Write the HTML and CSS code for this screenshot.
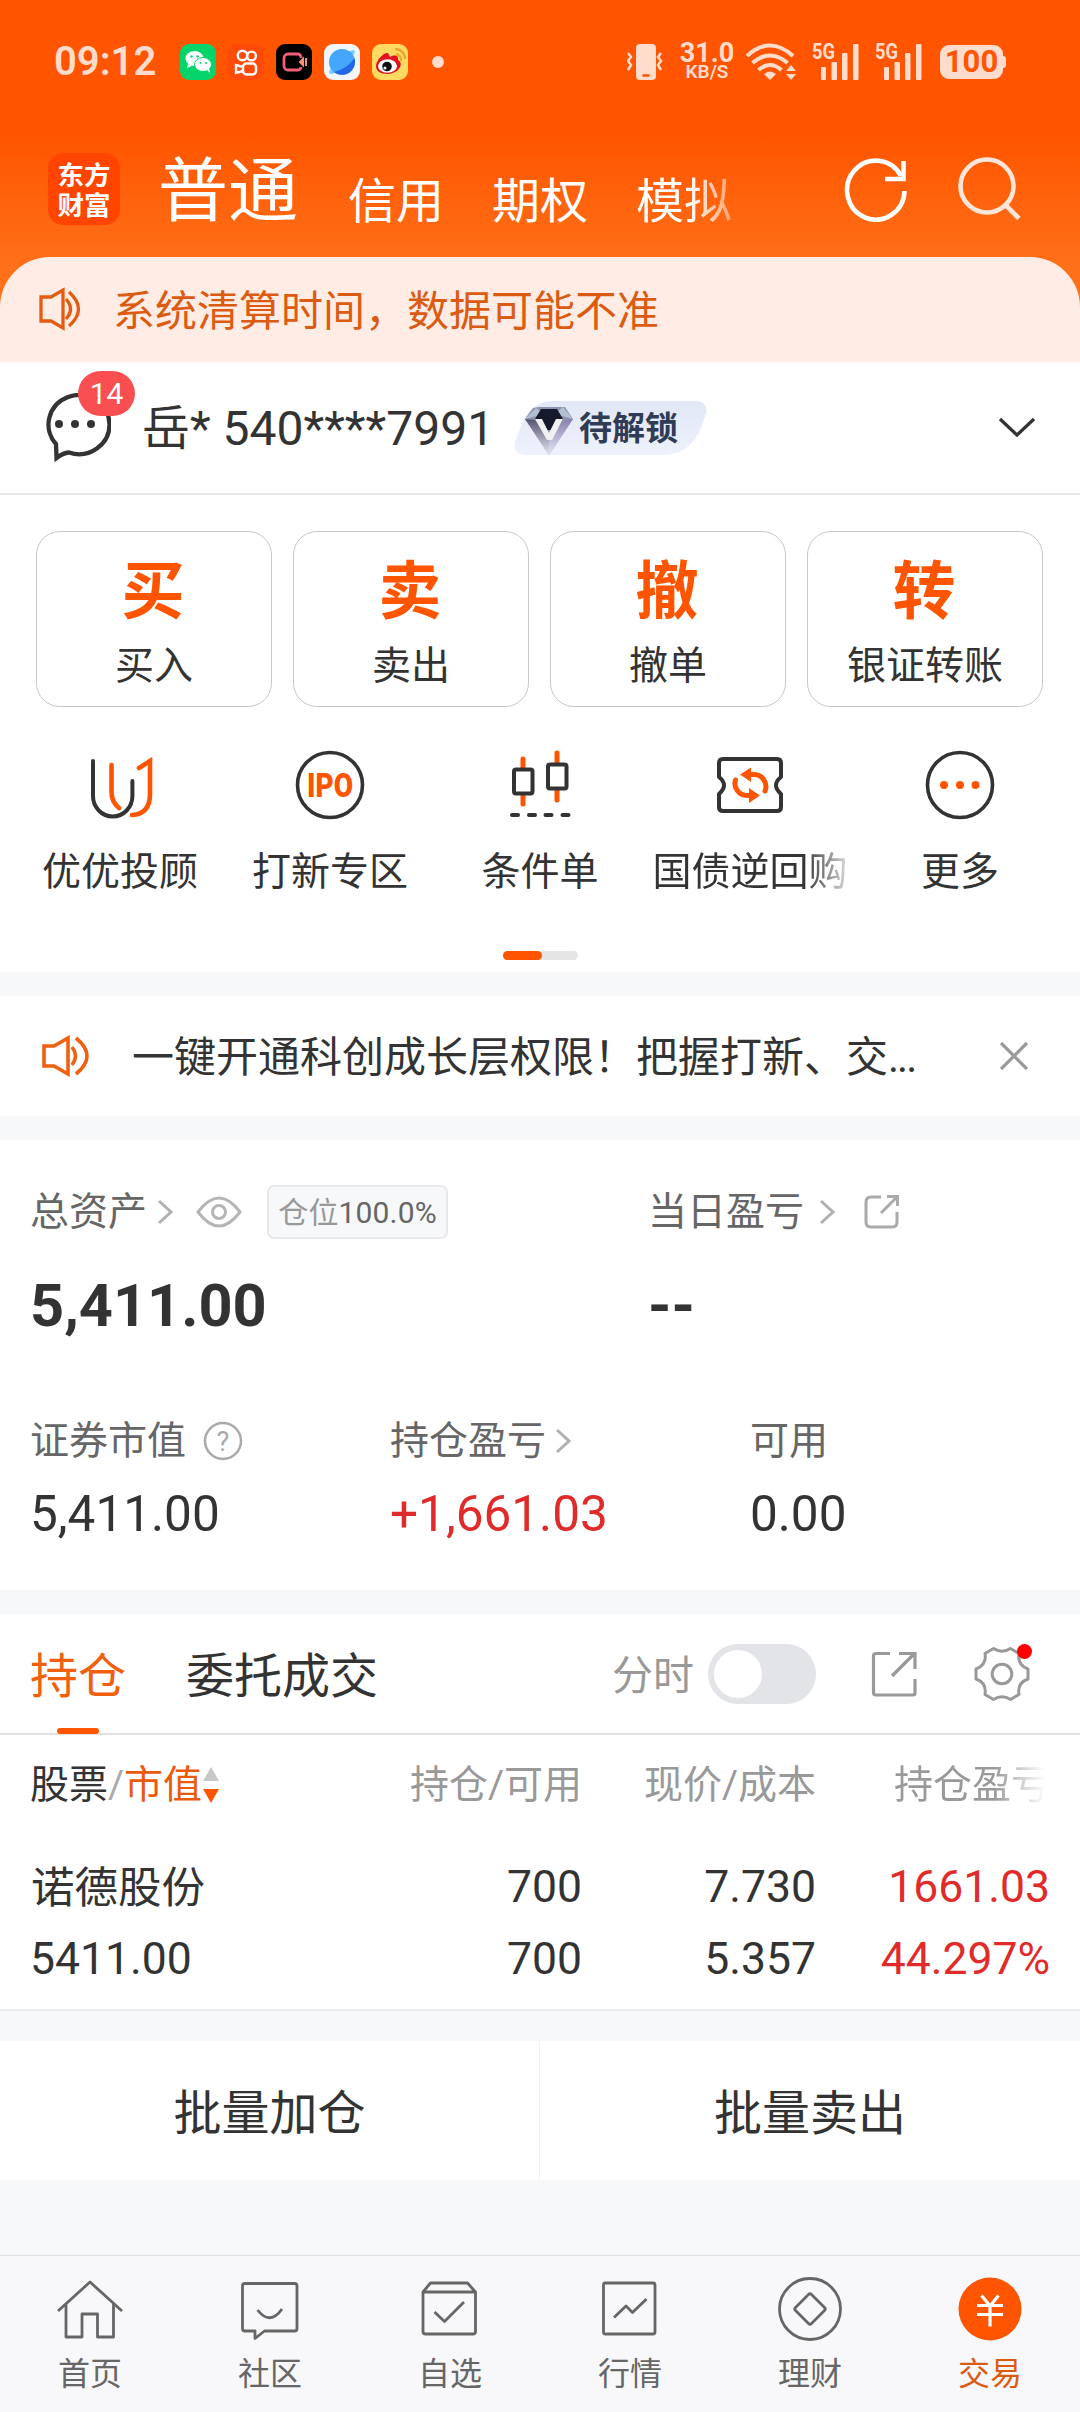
FILE: index.html
```html
<!DOCTYPE html>
<html lang="zh-CN">
<head>
<meta charset="utf-8">
<title>交易</title>
<link rel="stylesheet" href="styles.css">
</head>
<body>
<div class="screen">
  <div class="top">
    <div class="status">
      <span class="clock">09:12</span>
      <div class="apps">
        <svg width="36" height="36" viewBox="0 0 36 36"><rect width="36" height="36" rx="9" fill="#05d46b"/><ellipse cx="14.500" cy="14.500" rx="9" ry="7.500" fill="#fff"/><path d="M8 20l-1 4 5-2z" fill="#fff"/><ellipse cx="23" cy="20.500" rx="8.500" ry="7" fill="#fff" stroke="#05d46b"/><path d="M27 26l3 3-1-5z" fill="#fff"/><circle cx="11.500" cy="12.500" r="1.200" fill="#05d46b"/><circle cx="17.500" cy="12.500" r="1.200" fill="#05d46b"/><circle cx="20.500" cy="19" r="1" fill="#05d46b"/><circle cx="26" cy="19" r="1" fill="#05d46b"/></svg>
        <svg width="36" height="36" viewBox="0 0 36 36" fill="none" stroke="#fff" stroke-width="2.400"><rect width="36" height="36" rx="9" fill="#ff4a0a" stroke="none"/><circle cx="14.500" cy="11.500" r="4.800"/><circle cx="23.500" cy="12" r="4.400"/><rect x="15" y="19.500" width="13" height="11" rx="3.500"/><path d="M15 23l-7-2v8l7-2"/></svg>
        <svg width="36" height="36" viewBox="0 0 36 36" fill="none"><rect width="36" height="36" rx="9" fill="#000"/><path d="M25 14v-1a3 3 0 0 0-3-3H12a4 4 0 0 0-4 4v8a4 4 0 0 0 4 4h10a3 3 0 0 0 3-3" stroke="#ef5f78" stroke-width="2.800"/><path d="M24 18l3-3v6zM30 14v8" fill="#f98e7c" stroke="#f98e7c" stroke-width="2"/></svg>
        <svg width="36" height="36" viewBox="0 0 36 36"><rect width="36" height="36" rx="9" fill="#f2f5f9"/><ellipse cx="18" cy="18" rx="17" ry="4.500" transform="rotate(-43 18 18)" fill="#80cbfb"/><circle cx="18" cy="18" r="13" fill="#45a6fa"/><path d="M30.500 14A13 13 0 0 1 10 28Q23 25 30.500 14z" fill="#2466e8"/></svg>
        <svg width="36" height="36" viewBox="0 0 36 36" fill="none"><rect width="36" height="36" rx="9" fill="#ffda62"/><path d="M4 22c0-6 8-14 12-13l2 4c5-3 9-1 8 3 6 3 2 13-10 14C8 30 4 27 4 22z" fill="#e01221"/><ellipse cx="15.500" cy="22" rx="9.500" ry="6.700" fill="#fff"/><circle cx="15" cy="22.500" r="4.800" fill="#111"/><circle cx="13" cy="24" r="1.500" fill="#fff"/><path d="M24 10a6 6 0 0 1 5 7M23 5a10 10 0 0 1 10 10" stroke="#f0a52a" stroke-width="2.300"/></svg>
      </div>
      <i class="more-dot"></i>
      <svg class="vibrate" width="38" height="36" viewBox="0 0 38 36" fill="none" stroke="#ffdccb" stroke-width="2.500"><rect x="9" width="20" height="36" rx="4" fill="#ffdccb" stroke="none"/><path d="M15.500 31.500h7" stroke="#ff5500"/><path d="M1 9l3 4-3 4 3 4-3 5M34 9l-3 4 3 4-3 4 3 5"/></svg>
      <div class="speed"><b>31.0</b><span>KB/S</span></div>
      <svg class="wifi" width="52" height="38" viewBox="0 0 52 38" fill="none" stroke="#ffdccb" stroke-width="4"><path d="M2 13Q25-8 48 13M7.500 20Q25 5 42.500 20M13.500 27Q25 17 36.500 27"/><path d="M25 37l-6-6q6-5 12 0zM46 22l5 6H41zM46 37l5-6H41z" fill="#ffdccb" stroke="none"/></svg>
      <svg class="signal" width="49" height="38" viewBox="0 0 49 38" fill="#ffdccb"><text x="1" y="16" textLength="23" lengthAdjust="spacingAndGlyphs">5G</text><rect x="10" y="24" width="5" height="13" rx="1"/><rect x="20.500" y="19" width="5.500" height="18" rx="1"/><rect x="31" y="10" width="5.500" height="27" rx="1"/><rect x="42" y="1" width="5.500" height="36" rx="1"/></svg>
      <svg class="signal" width="49" height="38" viewBox="0 0 49 38" fill="#ffdccb"><text x="1" y="16" textLength="23" lengthAdjust="spacingAndGlyphs">5G</text><rect x="10" y="24" width="5" height="13" rx="1"/><rect x="20.500" y="19" width="5.500" height="18" rx="1"/><rect x="31" y="10" width="5.500" height="27" rx="1"/><rect x="42" y="1" width="5.500" height="36" rx="1"/></svg>
      <div class="battery"><span>100</span></div>
    </div>
    <div class="header">
      <div class="logo"><span>东方</span><span>财富</span></div>
      <span class="tab-main">普通</span>
      <span class="tab">信用</span>
      <span class="tab">期权</span>
      <span class="tab fade">模拟</span>
      <svg class="refresh" width="64" height="64" viewBox="0 0 64 64" fill="none" stroke="#fff" stroke-width="4.600"><path d="M60.500 33A28.700 29.500 0 1 1 57 18"/><path d="M59.500 3v18H41"/></svg>
      <svg width="66" height="66" viewBox="0 0 66 66" fill="none" stroke="#ffe6d8" stroke-width="4.600"><circle cx="30" cy="30" r="26.500"/><path d="M48.500 49L62 62.500"/></svg>
    </div>
    <div class="notice">
      <svg width="42" height="44" viewBox="0 0 42 44" fill="none" stroke="#e35c12" stroke-width="3.300"><path d="M2 10h10L24 3v38l-12-7H2z"/><path d="M27 12q9 10 0 20M30 5q19 17 0 34"/></svg>
      <span>系统清算时间，数据可能不准</span>
    </div>
  </div>

  <div class="account">
    <div class="msg">
      <svg width="70" height="70" viewBox="0 0 70 70" fill="none" stroke="#333" stroke-width="4.300"><path d="M15 51A30.500 29.500 0 1 1 28 59.500Q22 60 15.500 65Z" stroke-linejoin="miter"/><g fill="#333" stroke="none"><circle cx="18" cy="31" r="4"/><circle cx="34" cy="31" r="4"/><circle cx="50" cy="31" r="4"/></g></svg>
      <span class="count">14</span>
    </div>
    <span class="acct-name">岳* 540****7991</span>
    <div class="vip">
      <svg class="vip-bg" width="193" height="54" viewBox="0 0 193 54"><defs><linearGradient id="vg" x1="0" y1="0" x2="0" y2="1"><stop offset="0" stop-color="#e1e7f5"/><stop offset="1" stop-color="#eef2fd"/></linearGradient></defs><path d="M40 0H182Q195 1 192 13L187 27Q176 54 149 54H11Q-2 53 1 41L7 25Q16 0 40 0z" fill="url(#vg)"/></svg>
      <svg width="48" height="48" viewBox="0 0 48 48"><defs><linearGradient id="dl" x1="0" y1="0" x2="0" y2="1"><stop offset="0" stop-color="#55526f"/><stop offset="1" stop-color="#e6e9f6"/></linearGradient><linearGradient id="dr" x1="0" y1="0" x2="0" y2="1"><stop offset="0" stop-color="#8a7fb0"/><stop offset="1" stop-color="#e6e9f6"/></linearGradient></defs><path d="M8 1L14 0H40L48 12 24 48 0 12z" fill="#8f93ad"/><path d="M11 1l8 6L0 12zM38 0l-8 7 18 5z" fill="#b3bfd3"/><path d="M16 2h16l6 10-6 11H17L10 12z" fill="#15192c"/><path d="M0 12l10 1 14 18v17z" fill="url(#dl)"/><path d="M48 12l-8 1-16 18v17z" fill="url(#dr)"/><path d="M10 12h7l7 14 7-14h7L27 33h-5z" fill="#f1f1f2"/></svg>
      <b>待解锁</b>
    </div>
    <svg class="chev" width="40" height="24" viewBox="0 0 40 24" fill="none" stroke="#333" stroke-width="3.300"><path d="M3 3l17 16L37 3"/></svg>
  </div>

  <div class="trade">
    <div class="cards">
      <div class="card"><b>买</b><span>买入</span></div>
      <div class="card"><b>卖</b><span>卖出</span></div>
      <div class="card"><b>撤</b><span>撤单</span></div>
      <div class="card"><b>转</b><span>银证转账</span></div>
    </div>
    <div class="quick">
      <div class="q"><svg width="72" height="72" viewBox="0 0 72 72" fill="none" stroke-width="4" stroke-linecap="round"><path d="M9 12V47A19.700 20.500 0 0 0 48.400 47V32" stroke="#333"/><path d="M27.500 16V43Q27.500 53 35 59M55 19L66 12V45Q66 65 48 66" stroke="#ff5500" stroke-width="4.600"/></svg><span>优优投顾</span></div>
      <div class="q"><svg width="72" height="72" viewBox="0 0 72 72"><circle cx="36" cy="36" r="32.500" fill="none" stroke="#333" stroke-width="3.600"/><text class="ipo" x="13" y="48" textLength="46" lengthAdjust="spacingAndGlyphs">IPO</text></svg><span>打新专区</span></div>
      <div class="q"><svg width="72" height="72" viewBox="0 0 72 72" fill="none" stroke-width="4" stroke-linecap="round"><path d="M19 10v9M19 47v8M53 4v10M53 42v9" stroke="#ff5500" stroke-width="5"/><g stroke="#333"><rect x="10" y="20.500" width="18.500" height="24" rx="2"/><rect x="44" y="15.500" width="18.500" height="24" rx="2"/><path d="M8 66h6M25 66h6M41.500 66h6M58.500 66h6"/></g></svg><span>条件单</span></div>
      <div class="q"><svg width="72" height="72" viewBox="0 0 72 72" fill="none"><path d="M9 10H63Q67 10 67 14V28Q57 36 67 45V58Q67 62 63 62H9Q5 62 5 58V45Q15 36 5 28V14Q5 10 9 10z" stroke="#333" stroke-width="4" stroke-linejoin="round"/><path d="M34 25.500H40A12 12 0 0 1 51 42M38 46.500H33A12.500 12 0 0 1 21.500 31" stroke="#ff5500" stroke-width="5" stroke-linecap="round"/><path d="M26 25.500L37 18.500V33zM46 46.500L35 39V54z" fill="#ff5500"/></svg><span class="fade-q">国债逆回购</span></div>
      <div class="q"><svg width="72" height="72" viewBox="0 0 72 72"><circle cx="36" cy="36" r="32.500" fill="none" stroke="#333" stroke-width="3.600"/><g fill="#ff5500"><circle cx="20" cy="36" r="4"/><circle cx="36" cy="36" r="4"/><circle cx="51.500" cy="36" r="4"/></g></svg><span>更多</span></div>
    </div>
    <div class="pager"><i></i></div>
  </div>

  <div class="promo">
    <svg width="48" height="42" viewBox="0 0 48 42" fill="none" stroke="#f0600f" stroke-width="3.600"><path d="M2 11h10L26 3v36l-14-8H2z"/><path d="M30 12q7 9 0 18M34 3q22 18 0 36"/></svg>
    <span>一键开通科创成长层权限！把握打新、交<em>...</em></span>
    <svg class="close" width="28" height="28" viewBox="0 0 28 28" stroke="#999" stroke-width="3.300"><path d="M1 1l26 26M27 1L1 27"/></svg>
  </div>

  <div class="assets">
    <div class="line l1">
      <div class="half">
        <span class="lbl">总资产</span>
        <svg class="arr a1" width="18" height="28" viewBox="0 0 18 28"><path d="M3 3l12 11L3 25"/></svg>
        <svg class="eye" width="46" height="32" viewBox="0 0 46 32" fill="none" stroke="#b5b5b5" stroke-width="3"><path d="M2 16Q23-12 44 16 23 44 2 16z"/><circle cx="23" cy="16" r="6.500"/></svg>
        <span class="pos">仓位<em>100.0%</em></span>
      </div>
      <div class="half">
        <span class="lbl">当日盈亏</span>
        <svg class="arr a2" width="18" height="28" viewBox="0 0 18 28"><path d="M3 3l12 11L3 25"/></svg>
        <svg class="share-s" width="36" height="36" viewBox="0 0 36 36" fill="none" stroke="#aaa" stroke-width="3"><path d="M17 3H7Q2 3 2 8V28Q2 33 7 33H28Q33 33 33 28V18M23 2.500H33.500V12M33 3L17 19"/></svg>
      </div>
    </div>
    <div class="line l2"><b class="half">5,411.00</b><b class="half">--</b></div>
    <div class="line l3">
      <div class="third"><span class="lbl">证券市值</span><svg class="help" width="40" height="40" viewBox="0 0 40 40"><circle cx="20" cy="20" r="18" fill="none" stroke="#aaa" stroke-width="2.500"/><text x="20" y="30" text-anchor="middle">?</text></svg></div>
      <div class="third"><span class="lbl">持仓盈亏</span><svg class="arr a3" width="18" height="28" viewBox="0 0 18 28"><path d="M3 3l12 11L3 25"/></svg></div>
      <div class="third"><span class="lbl">可用</span></div>
    </div>
    <div class="line l4"><span class="third">5,411.00</span><span class="third red">+1,661.03</span><span class="third">0.00</span></div>
  </div>

  <div class="hold">
    <div class="hold-tabs">
      <span class="on">持仓</span>
      <span class="off">委托成交</span>
      <span class="fs">分时</span>
      <div class="toggle"><i></i></div>
      <svg class="share" width="48" height="48" viewBox="0 0 48 48" fill="none" stroke="#999" stroke-width="3.200"><path d="M20 3.500H6Q3.500 3.500 3.500 6V42.500Q3.500 45 6 45H43Q45 45 45 43V29M29 3.500H45V19M44 4L22 26"/></svg>
      <div class="gear">
        <svg width="56" height="56" viewBox="0 0 56 56" fill="none" stroke="#999" stroke-width="3" stroke-linejoin="round"><path d="M19.500 2.500Q28 8 36.500 2.500L45 7.500Q43 19 54 23V33Q43 37 45 48.500L36.500 53.500Q28 48 19.500 53.500L11 48.500Q13 37 2 33V23Q13 19 11 7.500Z"/><circle cx="28" cy="28" r="9.800"/></svg>
        <i></i>
      </div>
    </div>
    <div class="row head">
      <div class="c1">股票<s>/</s><em>市值</em><svg width="18" height="36" viewBox="0 0 18 36"><path d="M9 0l8 14H1z" fill="#c8c8c8"/><path d="M9 36l8-14H1z" fill="#ff5500"/></svg></div>
      <div class="c2">持仓/可用</div><div class="c3">现价/成本</div><div class="c4">持仓盈亏</div>
    </div>
    <div class="row r1"><div class="c1">诺德股份</div><div class="c2">700</div><div class="c3">7.730</div><div class="c4 red">1661.03</div></div>
    <div class="row r2"><div class="c1">5411.00</div><div class="c2">700</div><div class="c3">5.357</div><div class="c4 red">44.297%</div></div>
  </div>

  <div class="batch"><span>批量加仓</span><span>批量卖出</span></div>

  <div class="nav">
    <div class="n"><svg width="72" height="72" viewBox="0 0 72 72"><path d="M4 38L36 9 68 38M12 31V64H28V41H43.500V64H59.500V31"/></svg><span>首页</span></div>
    <div class="n"><svg width="72" height="72" viewBox="0 0 72 72"><path d="M11 10.500H60.500Q63 10.500 63 13V55.500Q63 58 60.500 58H30.500L21 65.500V58H11Q8.500 58 8.500 55.500V13Q8.500 10.500 11 10.500zM23.500 37Q36 53 48 36"/></svg><span>社区</span></div>
    <div class="n"><svg width="72" height="72" viewBox="0 0 72 72"><path d="M9 19L16.500 10H53.500L61.500 19V58.500Q61.500 61 59 61H11.500Q9 61 9 58.500V19H61.500M20.500 39L30.500 48.500 50 29"/></svg><span>自选</span></div>
    <div class="n"><svg width="72" height="72" viewBox="0 0 72 72"><rect x="9.500" y="10" width="51.500" height="51" rx="2"/><path d="M20 44.500L32 33 38.500 39.500 52.500 26"/></svg><span>行情</span></div>
    <div class="n"><svg width="72" height="72" viewBox="0 0 72 72"><circle cx="36" cy="36" r="30.500"/><path d="M34.500 21.500Q36 20 37.500 21.500L50.500 34.500Q52 36 50.500 37.500L37.500 50.500Q36 52 34.500 50.500L21.500 37.500Q20 36 21.500 34.500z"/></svg><span>理财</span></div>
    <div class="n active"><svg width="72" height="72" viewBox="0 0 72 72"><circle class="disc" cx="36" cy="36" r="31.500"/><path class="yen" d="M27.500 22.500L36 33 44.500 22.500M23 32.500H49M23 41.500H49M36 32V53.500"/></svg><span>交易</span></div>
  </div>
</div>
</body>
</html>
```
FILE: styles.css
```css
* { box-sizing: border-box; }
body { margin: 0; }
svg { display: block; flex: none; }
i, em, s { font-style: normal; text-decoration: none; }

.screen {
  width: 1080px; height: 2412px; overflow: hidden;
  display: flex; flex-direction: column;
  background: #f7f8fa; color: #333;
  font-family: Roboto, "Noto Sans CJK SC", sans-serif;
  white-space: nowrap;
}
.screen > div { flex: none; }

/* orange top */
.top { height: 362px; background: linear-gradient(#ff5500 135px, #ff7019 265px); }
.status { height: 124px; padding-left: 54px; display: flex; align-items: center; color: #ffdccb; }
.clock { width: 126px; font: 600 40px/48px Roboto, sans-serif; }
.apps { display: flex; gap: 12px; }
.more-dot { width: 12px; height: 12px; border-radius: 50%; background: #ffdccb; margin-left: 24px; }
.vibrate { margin-left: 183px; }
.speed { width: 60px; margin-left: 12px; display: flex; flex-direction: column; align-items: center; }
.speed b { font: 700 27px/20px Roboto, sans-serif; }
.speed span { font: 600 19px/18px Roboto, sans-serif; }
.wifi { margin-left: 8px; }
.signal { margin-left: 14px; font: 700 22px Roboto, sans-serif; overflow: visible; }
.battery {
  width: 63px; height: 34px; margin-left: 17px; border-radius: 9px; background: #ffdccb; position: relative;
  display: flex; align-items: center; justify-content: center;
}
.battery::after { content: ""; position: absolute; right: -3px; top: 11px; width: 3px; height: 12px; border-radius: 0 3px 3px 0; background: #ffdccb; }
.battery span { font: 700 31px/34px Roboto, sans-serif; color: #ff5500; }

.header { height: 133px; padding-left: 48px; display: flex; align-items: flex-start; color: #fff; }
.logo {
  width: 72px; height: 72px; margin: 29px 38px 0 0; padding-top: 6px; border-radius: 15px; background: #ff4500;
  display: flex; flex-direction: column; align-items: center;
  font: 700 26.5px/30px "Noto Sans CJK SC", sans-serif;
}
.tab-main { font-size: 70px; line-height: 80px; margin: 28px 50px 0 0; }
.tab { font-size: 48px; line-height: 60px; margin: 48px 48px 0 0; }
.fade { background: linear-gradient(90deg, #fff 55%, #ffa06a 100%); background-clip: text; -webkit-background-clip: text; color: transparent; }
.refresh { margin: 34px 49px 0 64px; }
.refresh + svg { margin-top: 32px; }

.notice {
  height: 105px; border-radius: 50px 50px 0 0; background: #ffede5; color: #dc5b13;
  display: flex; align-items: center; padding: 0 0 0 39px; font-size: 42px; line-height: 60px;
}
.notice svg { margin: 0 32px 2px 0; }
.notice span { margin-top: 4px; }

/* account */
.account { height: 133px; border-bottom: 2px solid #e8e8e8; background: #fff; display: flex; align-items: center; padding-left: 43px; }
.msg { position: relative; left: -2px; margin-right: 29px; }
.count {
  position: absolute; left: 37px; top: -22px; width: 57px; height: 45px; border-radius: 23px;
  background: #f94f50; color: #fff; font-size: 30px; line-height: 45px; text-align: center;
}
.acct-name { width: 372px; font-size: 48px; line-height: 60px; margin-top: 3px; }
.vip { position: relative; width: 193px; height: 54px; display: flex; align-items: center; padding-left: 11px; }
.vip-bg { position: absolute; left: 0; top: 0; }
.vip svg + svg { position: relative; margin: 6px 6px 0 0; }
.vip b { position: relative; color: #303b56; font-size: 33px; line-height: 54px; font-weight: 700; margin-top: 2px; }
.chev { margin-left: 290px; }

/* trade entry */
.trade { height: 477px; background: #fff; padding: 36px 36px 0; }
.cards { display: grid; grid-template-columns: repeat(4, 236px); gap: 21px; }
.card { height: 176px; border: 1px solid #c8c8c8; border-radius: 24px; display: flex; flex-direction: column; align-items: center; padding-top: 28px; }
.card b { font-size: 63px; line-height: 64px; color: #ff5500; position: relative; left: -1px; }
.card span { font-size: 39px; line-height: 50px; margin-top: 17px; }
.quick { margin: 42px -21px 0; display: grid; grid-template-columns: repeat(5, 210px); }
.q { display: flex; flex-direction: column; align-items: center; }
.q span { font-size: 39px; line-height: 50px; margin-top: 26px; }
.ipo { font: 900 33px Roboto, sans-serif; fill: #ff5500; }
.fade-q { background: linear-gradient(90deg, #333 78%, #ddd 100%); background-clip: text; -webkit-background-clip: text; color: transparent; }
.pager { width: 75px; height: 9px; margin: 54px auto 0; border-radius: 5px; background: #e5e5e5; }
.pager i { display: block; width: 39px; height: 9px; border-radius: 5px; background: #ff5500; }

.promo { height: 120px; margin: 24px 0; background: #fff; display: flex; align-items: center; padding-left: 42px; font-size: 42px; line-height: 60px; }
.promo span { width: 827px; padding-left: 42px; margin-top: 3px; }
.promo em { letter-spacing: -2px; }
.close { margin-left: 83px; }

/* assets */
.assets { height: 450px; background: #fff; padding: 42px 0 0 30px; }
.line { display: flex; align-items: center; }
.half { width: 618px; display: flex; align-items: center; flex: none; }
.third { width: 360px; display: flex; align-items: center; flex: none; }
.lbl { font-size: 39px; line-height: 56px; color: #666; }
.arr { fill: none; stroke: #b0b0b0; stroke-width: 3; }
.a1 { margin-left: 9px; }
.a2 { margin-left: 14px; }
.a3 { margin-left: 8px; }
.eye { margin-left: 22px; }
.pos {
  width: 181px; height: 54px; margin-left: 25px; border: 2px solid #e8e8ea; border-radius: 7px; background: #f7f8fa;
  font-size: 30px; line-height: 52px; color: #999; text-align: center; letter-spacing: .15px;
}
.pos em { color: #666; }
.share-s { margin-left: 28px; }
.l1 { height: 60px; }
.l2 { height: 72px; margin-top: 28px; font-size: 59.500px; }
.l3 { height: 60px; margin-top: 69px; }
.help { margin-left: 17px; font: 27px Roboto, sans-serif; fill: #aaa; }
.l4 { height: 60px; margin-top: 13px; font-size: 49.500px; }
.red { color: #e02b2b; }

/* holdings */
.hold { height: 397px; margin-top: 24px; background: #fff; border-bottom: 2px solid #ececee; }
.hold-tabs { height: 121px; border-bottom: 2px solid #e1e1e1; display: flex; align-items: center; padding-left: 30px; font-size: 48px; }
.on { height: 119px; line-height: 125px; color: #f0600f; position: relative; }
.on::after { content: ""; position: absolute; left: 27px; bottom: -1px; width: 42px; height: 6px; border-radius: 3px; background: #ff5500; }
.off { margin-left: 60px; height: 119px; line-height: 125px; }
.fs { width: 96px; height: 119px; margin-left: 234px; font-size: 41px; color: #999; line-height: 124px; }
.toggle { width: 108px; height: 60px; border-radius: 30px; background: #e3e4e7; padding: 6px; }
.toggle i { display: block; width: 48px; height: 48px; border-radius: 50%; background: #fff; }
.share { margin-left: 54px; }
.gear { position: relative; margin-left: 56px; }
.gear i { position: absolute; right: -2px; top: -2px; width: 15px; height: 15px; border-radius: 50%; background: #f00; }
.row { display: flex; padding-left: 31px; font-size: 44.500px; line-height: 60px; }
.c1 { width: 250px; display: flex; align-items: center; }
.c2 { width: 301px; text-align: right; }
.c3 { width: 234px; text-align: right; }
.c4 { width: 234px; text-align: right; }
.head { margin-top: 20px; font-size: 39px; color: #999; }
.head .c1 { color: #333; margin-left: -1px; width: 251px; }
.head s { color: #aaa; }
.head em { color: #ea5a0c; }
.head .c4 { background: linear-gradient(90deg, #999 76%, #fff 98%); background-clip: text; -webkit-background-clip: text; color: transparent; }
.r1 { margin-top: 42px; }
.r1 .c1 { font-size: 43.500px; padding-top: 2px; }
.r2 { margin-top: 10px; }
.r2 .c1 { margin-left: -1px; width: 251px; }

.batch { height: 139px; margin-top: 30px; background: #fff; display: flex; font-size: 48px; line-height: 145px; text-align: center; }
.batch span { width: 539px; }
.batch span + span { width: 541px; border-left: 1px solid #f2f2f4; }

/* bottom nav */
.nav { height: 157px; margin-top: 75px; border-top: 1px solid #dfe1e4; background: #f8f8fa; display: grid; grid-template-columns: repeat(6, 180px); }
.n { display: flex; flex-direction: column; align-items: center; padding-top: 17px; color: #666; }
.n svg { fill: none; stroke: #666; stroke-width: 2.800; stroke-linejoin: round; }
.n span { font-size: 32px; line-height: 44px; margin-top: 7px; }
.n .disc { fill: #ff5500; stroke: none; }
.n .yen { stroke: #fff; stroke-width: 3.200; }
.active { color: #dc5b13; }
```
